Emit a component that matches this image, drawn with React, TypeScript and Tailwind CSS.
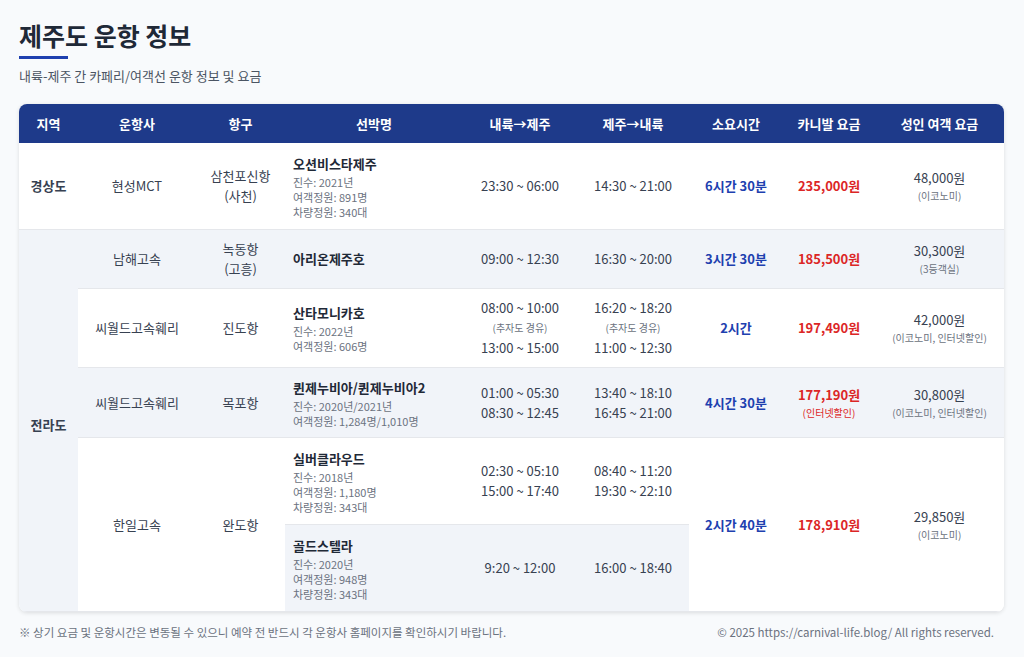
import React from 'react';

type Ship = {
  name: string;
  details: string[];
};

const font = { fontFamily: '"Noto Sans CJK KR", "Noto Sans", sans-serif' };

function ShipCell({ ship, gray, pad = 'py-[9px]' }: { ship: Ship; gray?: boolean; pad?: string }) {
  return (
    <td className={`px-2 ${pad} text-left align-middle border-b border-[#e5e7eb] ${gray ? 'bg-[#f1f4f9]' : ''}`}>
      <div className="text-[13px] leading-[22px] font-bold text-[#1f2937]">{ship.name}</div>
      {ship.details.map((d) => (
        <div key={d} className="text-[11px] leading-[15px] text-[#6b7280]">
          {d}
        </div>
      ))}
    </td>
  );
}

function Times({ lines, via, gray }: { lines: string[]; via?: boolean; gray?: boolean }) {
  return (
    <td className={`px-2 py-[9px] text-center align-middle border-b border-[#e5e7eb] text-[13px] leading-[20px] text-[#374151] ${gray ? 'bg-[#f1f4f9]' : ''}`}>
      {via ? (
        <>
          <div>{lines[0]}</div>
          <div className="text-[10px] text-[#6b7280]">(추자도 경유)</div>
          <div>{lines[1]}</div>
        </>
      ) : (
        lines.map((l) => <div key={l}>{l}</div>)
      )}
    </td>
  );
}

function Duration({ text, rowSpan }: { text: string; rowSpan?: number }) {
  return (
    <td rowSpan={rowSpan} className="px-2 text-center align-middle border-b border-[#e5e7eb] text-[13px] font-bold text-[#1e40af]">
      {text}
    </td>
  );
}

function Carnival({ price, note, rowSpan }: { price: string; note?: string; rowSpan?: number }) {
  return (
    <td rowSpan={rowSpan} className="px-2 text-center align-middle border-b border-[#e5e7eb] text-[#dc2626]">
      <div className="text-[13px] leading-[20px] font-bold">{price}</div>
      {note && <div className="text-[10px] leading-[16px]">{note}</div>}
    </td>
  );
}

function Adult({ price, note, rowSpan }: { price: string; note: string; rowSpan?: number }) {
  return (
    <td rowSpan={rowSpan} className="px-2 text-center align-middle border-b border-[#e5e7eb]">
      <div className="text-[13px] leading-[20px] text-[#374151]">{price}</div>
      <div className="text-[10px] leading-[16px] text-[#6b7280]">{note}</div>
    </td>
  );
}

const plain = 'px-2 text-center align-middle border-b border-[#e5e7eb] text-[13px] leading-[20px] text-[#374151]';

export default function App() {
  return (
    <div className="min-h-[657px] bg-[#f8fafc] pl-[19px] pr-5 pt-[18px] text-[#374151]" style={font}>
      <h1 className="text-[25px] leading-[34px] font-bold text-[#1f2937]">제주도 운항 정보</h1>
      <div className="mt-[4px] h-[3px] w-[49px] bg-[#1e40af]"></div>
      <p className="mt-[8px] text-[13px] leading-[18px] text-[#4b5563]">내륙-제주 간 카페리/여객선 운항 정보 및 요금</p>

      <div className="mt-[19px] overflow-hidden rounded-lg bg-white shadow-[0_1px_4px_rgba(0,0,0,0.12)]">
        <table className="w-full table-fixed border-collapse">
          <colgroup>
            <col className="w-[59px]" />
            <col className="w-[118px]" />
            <col className="w-[89px]" />
            <col className="w-[178px]" />
            <col className="w-[114px]" />
            <col className="w-[112px]" />
            <col className="w-[94px]" />
            <col className="w-[92px]" />
            <col className="w-[129px]" />
          </colgroup>
          <thead>
            <tr className="h-[39px] bg-[#1e3a8a] text-[13px] font-bold text-white">
              <th>지역</th>
              <th>운항사</th>
              <th>항구</th>
              <th>선박명</th>
              <th>내륙→제주</th>
              <th>제주→내륙</th>
              <th>소요시간</th>
              <th>카니발 요금</th>
              <th>성인 여객 요금</th>
            </tr>
          </thead>
          <tbody>
            <tr>
              <td className={`${plain} font-bold text-[#1f2937]`}>경상도</td>
              <td className={plain}>현성MCT</td>
              <td className={plain}>
                삼천포신항
                <br />
                (사천)
              </td>
              <ShipCell pad="pt-[10px] pb-[9px]" ship={{ name: '오션비스타제주', details: ['진수: 2021년', '여객정원: 891명', '차량정원: 340대'] }} />
              <Times lines={['23:30 ~ 06:00']} />
              <Times lines={['14:30 ~ 21:00']} />
              <Duration text="6시간 30분" />
              <Carnival price="235,000원" />
              <Adult price="48,000원" note="(이코노미)" />
            </tr>

            <tr className="bg-[#f1f4f9]">
              <td rowSpan={5} className={`${plain} font-bold text-[#1f2937] pt-[9px]`}>전라도</td>
              <td className={plain}>남해고속</td>
              <td className={`${plain} py-[9px]`}>
                녹동항
                <br />
                (고흥)
              </td>
              <ShipCell ship={{ name: '아리온제주호', details: [] }} />
              <Times lines={['09:00 ~ 12:30']} />
              <Times lines={['16:30 ~ 20:00']} />
              <Duration text="3시간 30분" />
              <Carnival price="185,500원" />
              <Adult price="30,300원" note="(3등객실)" />
            </tr>

            <tr className="bg-white">
              <td className={plain}>씨월드고속훼리</td>
              <td className={plain}>진도항</td>
              <ShipCell ship={{ name: '산타모니카호', details: ['진수: 2022년', '여객정원: 606명'] }} />
              <Times lines={['08:00 ~ 10:00', '13:00 ~ 15:00']} via />
              <Times lines={['16:20 ~ 18:20', '11:00 ~ 12:30']} via />
              <Duration text="2시간" />
              <Carnival price="197,490원" />
              <Adult price="42,000원" note="(이코노미, 인터넷할인)" />
            </tr>

            <tr className="bg-[#f1f4f9]">
              <td className={plain}>씨월드고속훼리</td>
              <td className={plain}>목포항</td>
              <ShipCell pad="pt-[8.5px] pb-[8.5px]" ship={{ name: '퀸제누비아/퀸제누비아2', details: ['진수: 2020년/2021년', '여객정원: 1,284명/1,010명'] }} />
              <Times lines={['01:00 ~ 05:30', '08:30 ~ 12:45']} />
              <Times lines={['13:40 ~ 18:10', '16:45 ~ 21:00']} />
              <Duration text="4시간 30분" />
              <Carnival price="177,190원" note="(인터넷할인)" />
              <Adult price="30,800원" note="(이코노미, 인터넷할인)" />
            </tr>

            <tr className="bg-white">
              <td rowSpan={2} className={plain}>한일고속</td>
              <td rowSpan={2} className={plain}>완도항</td>
              <ShipCell pad="pt-[10px] pb-[9px]" ship={{ name: '실버클라우드', details: ['진수: 2018년', '여객정원: 1,180명', '차량정원: 343대'] }} />
              <Times lines={['02:30 ~ 05:10', '15:00 ~ 17:40']} />
              <Times lines={['08:40 ~ 11:20', '19:30 ~ 22:10']} />
              <Duration text="2시간 40분" rowSpan={2} />
              <Carnival price="178,910원" rowSpan={2} />
              <Adult price="29,850원" note="(이코노미)" rowSpan={2} />
            </tr>

            <tr>
              <ShipCell gray pad="pt-[10px] pb-[9px]" ship={{ name: '골드스텔라', details: ['진수: 2020년', '여객정원: 948명', '차량정원: 343대'] }} />
              <Times gray lines={['9:20 ~ 12:00']} />
              <Times gray lines={['16:00 ~ 18:40']} />
            </tr>
          </tbody>
        </table>
      </div>

      <div className="mt-[12px] flex justify-between pr-[10px] text-[11.5px] leading-[16px] text-[#6b7280]">
        <span>※ 상기 요금 및 운항시간은 변동될 수 있으니 예약 전 반드시 각 운항사 홈페이지를 확인하시기 바랍니다.</span>
        <span>© 2025 https://carnival-life.blog/ All rights reserved.</span>
      </div>
    </div>
  );
}
